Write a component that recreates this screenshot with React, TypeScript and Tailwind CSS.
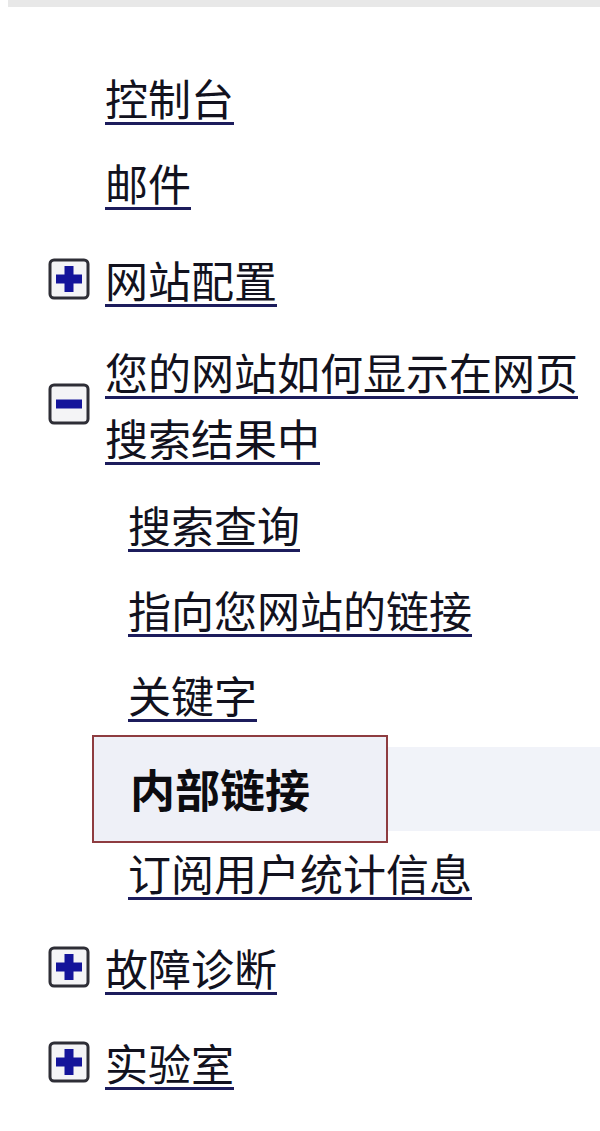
import type { ReactNode } from 'react';

const font = { fontFamily: '"Noto Sans CJK SC", "Noto Sans", sans-serif' };

function PlusBox() {
  return (
    <svg width="42" height="42" viewBox="0 0 42 42" className="shrink-0">
      <rect x="2" y="2" width="38" height="38" rx="4" fill="#f4f4f6" stroke="#2e2e36" strokeWidth="3" />
      <path d="M16.5 8h9v8.5H34v9h-8.5V34h-9v-8.5H8v-9h8.5z" fill="#14149a" />
    </svg>
  );
}

function MinusBox() {
  return (
    <svg width="42" height="42" viewBox="0 0 42 42" className="shrink-0">
      <rect x="2" y="2" width="38" height="38" rx="4" fill="#f4f4f6" stroke="#2e2e36" strokeWidth="3" />
      <rect x="8" y="16.5" width="26" height="9" fill="#14149a" />
    </svg>
  );
}

function Link({ children }: { children: ReactNode }) {
  return (
    <span className="underline decoration-[3px] decoration-[#1c1c5c] underline-offset-[6px] text-[#12121e]">
      {children}
    </span>
  );
}

export default function App() {
  return (
    <div className="min-h-screen w-[600px] bg-white text-[43px] leading-[66px]" style={font}>
      <div className="ml-[8px] h-[7px] bg-[#e8e8e8]" />

      <div className="mt-[57px] pl-[105px]">
        <Link>控制台</Link>
      </div>
      <div className="mt-[19px] pl-[105px]">
        <Link>邮件</Link>
      </div>

      <div className="mt-[31px] flex items-center pl-[48px] gap-[15px]">
        <PlusBox />
        <Link>网站配置</Link>
      </div>

      <div className="mt-[26px] flex items-center pl-[48px] gap-[15px]">
        <MinusBox />
        <div>
          <Link>您的网站如何显示在网页</Link>
          <br />
          <Link>搜索结果中</Link>
        </div>
      </div>

      <div className="mt-[21px] pl-[128px]">
        <Link>搜索查询</Link>
      </div>
      <div className="mt-[19px] pl-[128px]">
        <Link>指向您网站的链接</Link>
      </div>
      <div className="mt-[19px] pl-[128px]">
        <Link>关键字</Link>
      </div>

      <div className="mt-[8px] flex items-center pl-[92px]">
        <div className="w-[296px] h-[108px] border-2 border-[#8e3c40] bg-[#eef0f7] flex items-center pl-[36px]">
          <span className="font-bold text-[45px] text-[#0c0c10]">内部链接</span>
        </div>
        <div className="flex-1 h-[84px] bg-[#f1f3f9]" />
      </div>

      <div className="mt-[-4px] pl-[128px]">
        <Link>订阅用户统计信息</Link>
      </div>

      <div className="mt-[29px] flex items-center pl-[48px] gap-[15px]">
        <PlusBox />
        <Link>故障诊断</Link>
      </div>
      <div className="mt-[29px] flex items-center pl-[48px] gap-[15px]">
        <PlusBox />
        <Link>实验室</Link>
      </div>
    </div>
  );
}
